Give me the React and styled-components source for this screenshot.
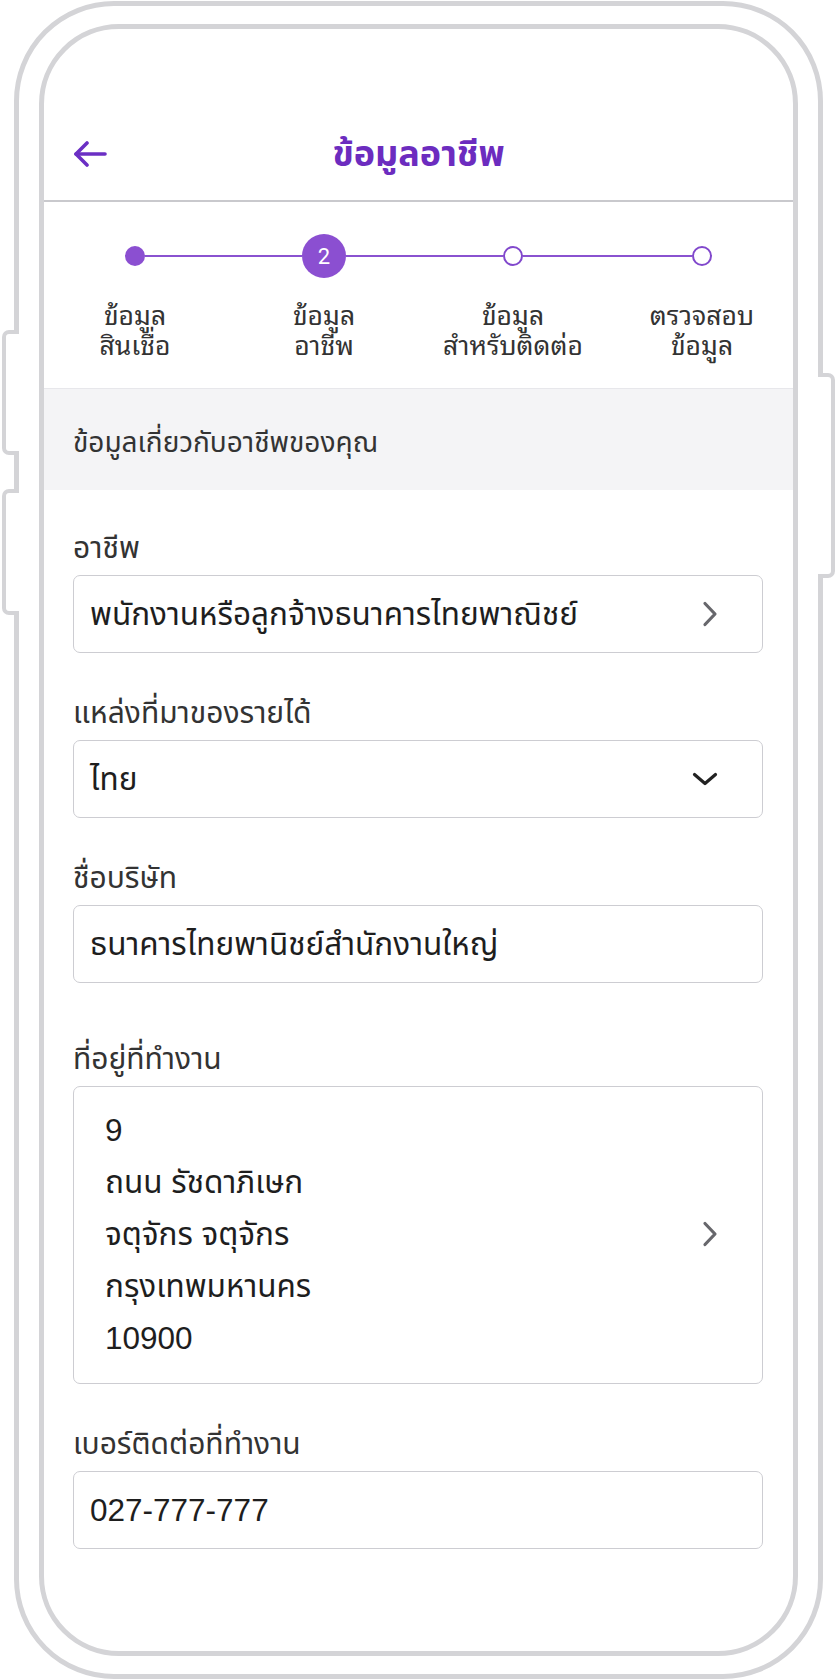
import React from "react";
import styled, { createGlobalStyle } from "styled-components";

const Global = createGlobalStyle`
  html, body { margin: 0; padding: 0; background: #fff; }
  body {
    font-family: "Liberation Sans", "Noto Sans Thai", "Noto Sans", sans-serif;
    -webkit-font-smoothing: antialiased;
  }
  *, *::before, *::after { box-sizing: border-box; }
`;

const FRAME = "#d4d4d7";

const Page = styled.div`
  width: 837px;
  height: 1680px;
  padding: 1px 0 0 14px;
  background: #fff;
`;

const PhoneShell = styled.div`
  position: relative;
  width: 809px;
  height: 1678px;
  border: 5px solid ${FRAME};
  border-radius: 100px;
  padding: 18px 20px;
  background: #fff;
`;

const SideButton = styled.span`
  position: absolute;
  top: ${(p) => p.$top}px;
  height: ${(p) => p.$h}px;
  width: 17px;
  border: 4px solid ${FRAME};
  background: #fff;
  ${(p) =>
    p.$side === "left"
      ? `left: -17px; border-right: none; border-radius: 7px 0 0 7px;`
      : `right: -17px; border-left: none; border-radius: 0 7px 7px 0;`}
`;

const Screen = styled.div`
  height: 100%;
  border: 5px solid ${FRAME};
  border-radius: 80px;
  overflow: hidden;
  display: flex;
  flex-direction: column;
  background: #fff;
`;

const Header = styled.header`
  height: 173px;
  flex: none;
  border-bottom: 2px solid #c9c9cd;
  display: grid;
  grid-template-columns: 1fr auto 1fr;
  align-items: center;
  align-content: end;
  padding: 0 29px 17px;
`;

const BackButton = styled.button`
  justify-self: start;
  display: flex;
  align-items: center;
  height: 56px;
  padding: 0;
  border: none;
  background: none;
  color: #6b2fc4;
`;

const Title = styled.h1`
  margin: 0;
  padding-top: 3px;
  font-size: 36px;
  line-height: 56px;
  font-weight: 700;
  color: #6c2cbf;
  font-family: "Noto Sans Thai", "Liberation Sans", sans-serif;
`;

const Stepper = styled.ol`
  list-style: none;
  margin: 0 -3.5px;
  padding: 32px 0 30px;
  display: grid;
  grid-template-columns: repeat(4, 1fr);
`;

const Step = styled.li`
  display: flex;
  flex-direction: column;
  align-items: center;
`;

const DotRow = styled.div`
  width: 100%;
  height: 44px;
  display: flex;
  align-items: center;
`;

const Connector = styled.span`
  flex: 1;
  height: 2px;
  background: ${(p) => (p.$hidden ? "transparent" : "#8a52d0")};
`;

const Dot = styled.span`
  flex: none;
  display: flex;
  align-items: center;
  justify-content: center;
  border-radius: 50%;
  width: ${(p) => (p.$state === "active" ? 44 : 20)}px;
  height: ${(p) => (p.$state === "active" ? 44 : 20)}px;
  background: ${(p) => (p.$state === "todo" ? "#fff" : "#8b4fd1")};
  border: ${(p) => (p.$state === "todo" ? "2px solid #8148cc" : "none")};
  color: #fff;
  font-family: Roboto, "Liberation Sans", sans-serif;
  font-size: 22px;
`;

const StepLabel = styled.span`
  margin-top: 20px;
  font-size: 26.5px;
  line-height: 30px;
  text-align: center;
  color: #333;
  white-space: pre-line;
  font-family: "Noto Sans Thai Looped", "Noto Sans Thai", "Liberation Sans", sans-serif;
`;

const SectionBanner = styled.div`
  flex: none;
  height: 102px;
  border-top: 1px solid #e7e7eb;
  background: #f4f4f6;
  display: flex;
  align-items: center;
  padding: 8px 0 0 29px;
  font-size: 28px;
  color: #333;
`;

const Form = styled.div`
  padding: 40px 30px 0 29px;
  display: flex;
  flex-direction: column;
`;

const Field = styled.div`
  display: flex;
  flex-direction: column;
  margin-top: ${(p) => p.$gap || 0}px;
`;

const Label = styled.label`
  font-size: 30px;
  line-height: 36px;
  color: #333;
  margin-bottom: 9px;
`;

const Box = styled.div`
  min-height: 78px;
  border: 1.5px solid #cdcdd2;
  border-radius: 7px;
  display: flex;
  align-items: center;
  justify-content: space-between;
  padding: ${(p) => (p.$multi ? "17px 44px 19px 31px" : "0 44px 0 16px")};
  font-size: 31.5px;
  color: #1e1e1e;
`;

const Value = styled.span`
  line-height: 40px;
`;

const AddressLines = styled.div`
  display: flex;
  flex-direction: column;
`;

const AddressLine = styled.span`
  line-height: 52px;
`;

const IconSlot = styled.span`
  flex: none;
  display: flex;
  align-items: center;
  color: ${(p) => p.$color};
`;

const ArrowLeft = () => (
  <svg width="34" height="26" viewBox="0 0 34 26" fill="none" stroke="currentColor" strokeWidth="3.6" strokeLinecap="round" strokeLinejoin="round">
    <path d="M3 13H32" />
    <path d="M14 2L3 13L14 24" />
  </svg>
);

const ChevronRight = () => (
  <svg width="16" height="26" viewBox="0 0 16 26" fill="none" stroke="currentColor" strokeWidth="3.2" strokeLinecap="round" strokeLinejoin="round">
    <path d="M3 2.5L13 13L3 23.5" />
  </svg>
);

const ChevronDown = () => (
  <svg width="26" height="14" viewBox="0 0 26 14" fill="none" stroke="currentColor" strokeWidth="3.2" strokeLinecap="round" strokeLinejoin="round">
    <path d="M2.5 2.5L13 11.5L23.5 2.5" />
  </svg>
);

const steps = [
  { label: "ข้อมูล\nสินเชื่อ", state: "done" },
  { label: "ข้อมูล\nอาชีพ", state: "active", num: 2 },
  { label: "ข้อมูล\nสำหรับติดต่อ", state: "todo" },
  { label: "ตรวจสอบ\nข้อมูล", state: "todo" },
];

export default function App() {
  return (
    <Page>
      <Global />
      <PhoneShell>
        <SideButton $side="left" $top={324} $h={125} />
        <SideButton $side="left" $top={483} $h={126} />
        <SideButton $side="right" $top={367} $h={205} />
        <Screen>
          <Header>
            <BackButton aria-label="back">
              <ArrowLeft />
            </BackButton>
            <Title>ข้อมูลอาชีพ</Title>
            <span />
          </Header>

          <Stepper>
            {steps.map((s, i) => (
              <Step key={i}>
                <DotRow>
                  <Connector $hidden={i === 0} />
                  <Dot $state={s.state}>{s.num}</Dot>
                  <Connector $hidden={i === steps.length - 1} />
                </DotRow>
                <StepLabel>{s.label}</StepLabel>
              </Step>
            ))}
          </Stepper>

          <SectionBanner>ข้อมูลเกี่ยวกับอาชีพของคุณ</SectionBanner>

          <Form>
            <Field>
              <Label>อาชีพ</Label>
              <Box>
                <Value>พนักงานหรือลูกจ้างธนาคารไทยพาณิชย์</Value>
                <IconSlot $color="#67676c">
                  <ChevronRight />
                </IconSlot>
              </Box>
            </Field>

            <Field $gap={42}>
              <Label>แหล่งที่มาของรายได้</Label>
              <Box>
                <Value>ไทย</Value>
                <IconSlot $color="#222">
                  <ChevronDown />
                </IconSlot>
              </Box>
            </Field>

            <Field $gap={42}>
              <Label>ชื่อบริษัท</Label>
              <Box>
                <Value>ธนาคารไทยพานิชย์สำนักงานใหญ่</Value>
              </Box>
            </Field>

            <Field $gap={58}>
              <Label>ที่อยู่ที่ทำงาน</Label>
              <Box $multi>
                <AddressLines>
                  <AddressLine>9</AddressLine>
                  <AddressLine>ถนน รัชดาภิเษก</AddressLine>
                  <AddressLine>จตุจักร จตุจักร</AddressLine>
                  <AddressLine>กรุงเทพมหานคร</AddressLine>
                  <AddressLine>10900</AddressLine>
                </AddressLines>
                <IconSlot $color="#67676c">
                  <ChevronRight />
                </IconSlot>
              </Box>
            </Field>

            <Field $gap={42}>
              <Label>เบอร์ติดต่อที่ทำงาน</Label>
              <Box>
                <Value>027-777-777</Value>
              </Box>
            </Field>
          </Form>
        </Screen>
      </PhoneShell>
    </Page>
  );
}
